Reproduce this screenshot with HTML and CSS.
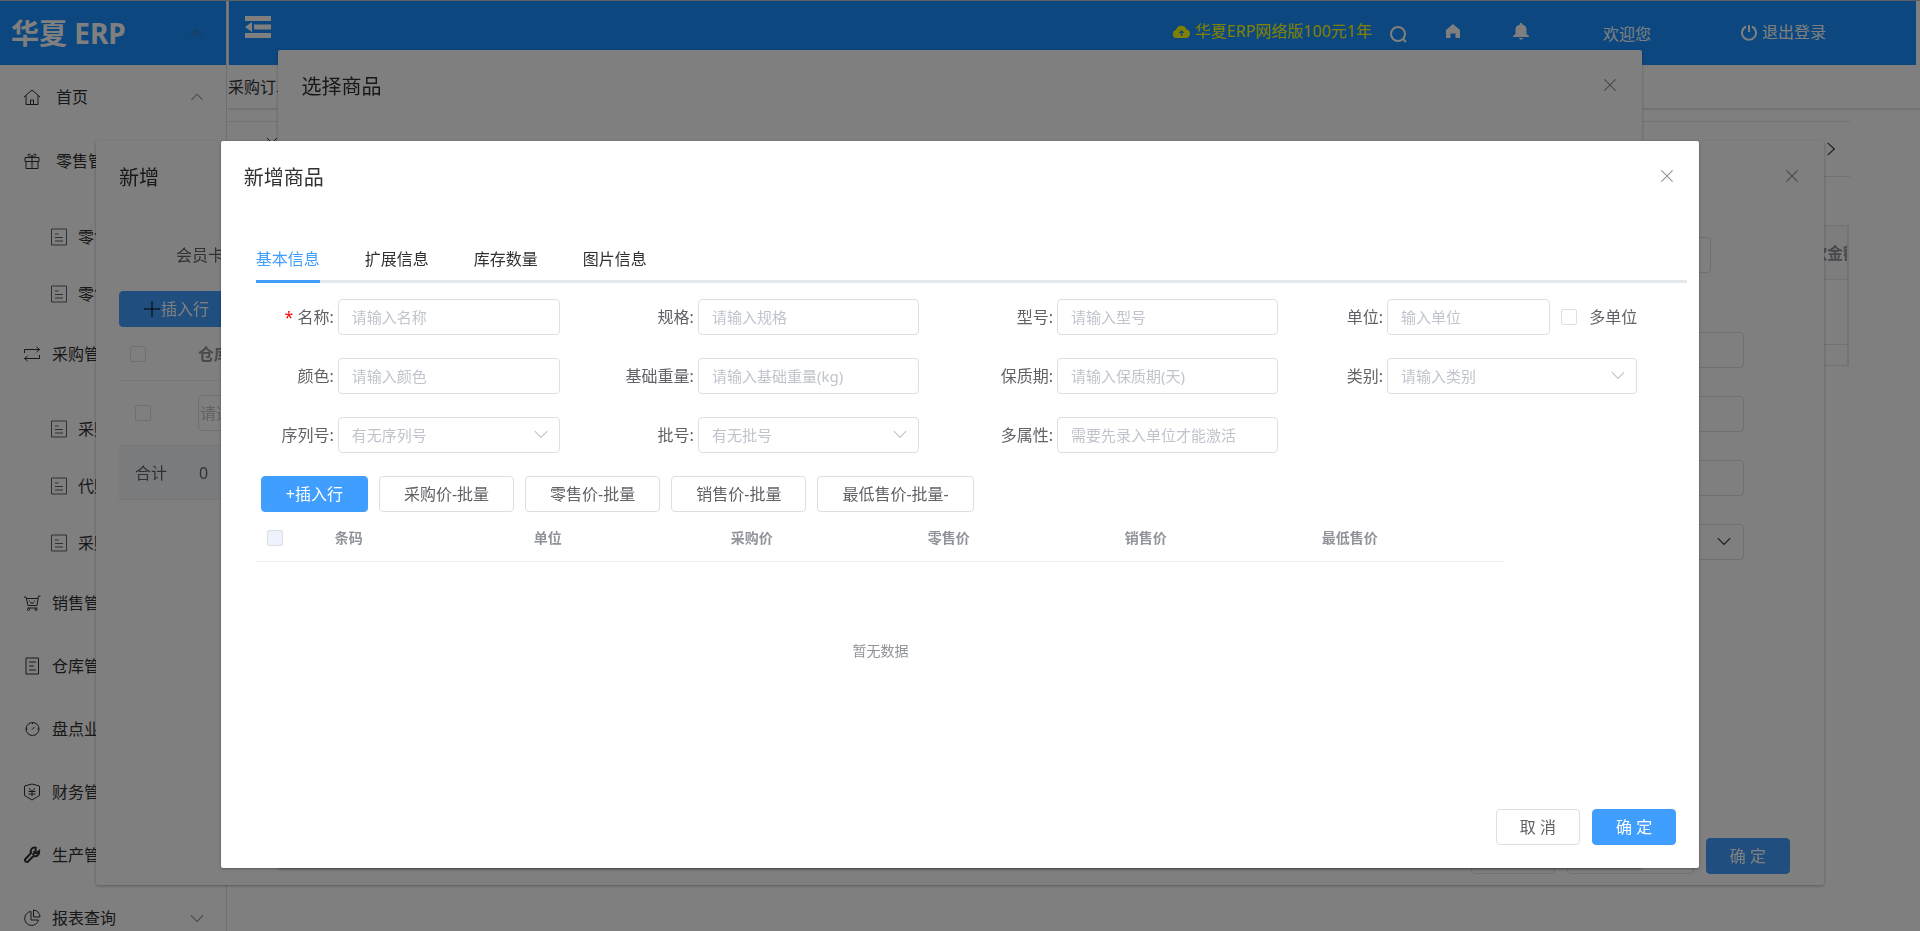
FILE: index.html
```html
<!DOCTYPE html>
<html lang="zh-CN">
<head>
<meta charset="utf-8">
<title>华夏 ERP</title>
<link rel="stylesheet" href="styles.css">
</head>
<body>
<svg class="defs" aria-hidden="true">
  <symbol id="i-up" viewBox="0 0 16 16"><path d="M3 10.500 8 5.500l5 5"/></symbol>
  <symbol id="i-down" viewBox="0 0 16 16"><path d="M2.500 5.500 8 11l5.500-5.500"/></symbol>
  <symbol id="i-right" viewBox="0 0 16 16"><path d="M5 2.500 11 8 5 13.500"/></symbol>
  <symbol id="i-close" viewBox="0 0 16 16"><path d="M3 3l10 10M13 3l-10 10"/></symbol>
  <symbol id="i-doc" viewBox="0 0 18 18"><path d="M1.500 1h15v16h-15zM5 6h3.500M5 9.500h8M5 13h8"/></symbol>
</svg>

<div class="app">
  <aside class="sidebar">
    <div class="brand">华夏 ERP <svg class="ico arrow"><use href="#i-up"/></svg></div>
    <nav class="menu">
      <a class="item wide" href="#"><svg class="ico" viewBox="0 0 18 18"><path d="M1 9 9 2l8 7M3 7.500V16.500h12V7.500M7.500 16.500v-4.500h3v4.500"/></svg>首页<svg class="ico arrow"><use href="#i-up"/></svg></a>
      <a class="item wide" href="#"><svg class="ico" viewBox="0 0 18 18"><path d="M2 5.500h14v4H2zM3 9.500v7h12v-7M9 5.500v11M9 5.500C5 5.500 4 2 6 2s3 3.500 3 3.500S10 2 12 2s1 3.500-3 3.500"/></svg>零售管理</a>
      <div class="sub">
        <a href="#"><svg class="ico"><use href="#i-doc"/></svg>零售出库</a>
        <a href="#"><svg class="ico"><use href="#i-doc"/></svg>零售退货</a>
      </div>
      <a class="item" href="#"><svg class="ico" viewBox="0 0 18 18"><path d="M1.500 8V4.500h15M13.500 2l3 2.500-3 2.500M16.500 10v3.500h-15M4.500 11l-3 2.500 3 2.500"/></svg>采购管理</a>
      <div class="sub">
        <a href="#"><svg class="ico"><use href="#i-doc"/></svg>采购订单</a>
        <a href="#"><svg class="ico"><use href="#i-doc"/></svg>代购订单</a>
        <a href="#"><svg class="ico"><use href="#i-doc"/></svg>采购入库</a>
      </div>
      <a class="item" href="#"><svg class="ico" viewBox="0 0 18 18"><path d="M1 3h2l2 8.500h9L15.500 2H17.500M3.500 4.500H15M4.500 14h10M6.500 6.500v1M11.500 6.500v1M7 8.500q2 1.500 4 0"/><circle cx="5.500" cy="15.500" r="1"/><circle cx="13" cy="15.500" r="1"/></svg>销售管理</a>
      <a class="item" href="#"><svg class="ico" viewBox="0 0 18 18"><path d="M3 1h12.500v16H3zM6 5h7M6 9h5M6 13h7"/></svg>仓库管理</a>
      <a class="item" href="#"><svg class="ico" viewBox="0 0 18 18"><circle cx="9.500" cy="9" r="6.500"/><path d="M9 9.500 11.500 7M9.500 2.500v1.500M3 9h1.500M14.500 9H16"/></svg>盘点业务</a>
      <a class="item" href="#"><svg class="ico" viewBox="0 0 18 18"><path d="M9 1l7.500 2v9.500L9 17l-7.500-4.500V3zM6 5l3 3.500L12 5M5.500 8.500h7M5.500 11h7M9 8.500V13.500"/></svg>财务管理</a>
      <a class="item" href="#"><svg class="ico bold" viewBox="0 0 18 18"><path d="M12.500 5.500l.3-3.800C9 1 7 4 8 7L2 13.500q-.5 2.500 2.500 2.500L10.500 10c3 1 6-1 5.700-5l-2.700 2-2-1zM11.500 7 9.500 9"/></svg>生产管理</a>
      <a class="item" href="#"><svg class="ico" viewBox="0 0 18 18"><path d="M8 2.500A7 7 0 1 0 15.500 11H8zM10.500 1v7h6.500A7 7 0 0 0 10.500 1z"/></svg>报表查询<svg class="ico arrow"><use href="#i-down"/></svg></a>
    </nav>
  </aside>

  <main class="main">
    <header class="topbar">
      <button class="fold" aria-label="收起菜单"><svg width="26" height="22" viewBox="0 0 26 22"><path d="M0 0h26v5H0zM9 8.500h17v5H9zM0 17h26v5H0zM7 6v10L0 11z"/></svg></button>
      <a class="promo" href="#"><svg width="17" height="13" viewBox="0 0 17 13"><path fill-rule="evenodd" d="M4.500 13A4 4 0 0 1 3 5 5.500 5.500 0 0 1 13.500 4.500 4.300 4.300 0 0 1 13 13zM8.500 5 5.500 8h2.300v3h1.400V8h2.300z"/></svg>华夏ERP网络版100元1年</a>
      <a class="search" href="#" aria-label="搜索"><svg width="17" height="17" viewBox="0 0 17 17"><circle cx="8" cy="8" r="7"/><path d="M13 13l3 3"/></svg></a>
      <a class="home" href="#" aria-label="主页"><svg width="16" height="16" viewBox="0 0 16 16"><path d="M8 1 1 7v8h4.500v-4.500h5V15H15V7z"/></svg></a>
      <a class="bell" href="#" aria-label="消息"><svg width="16" height="17" viewBox="0 0 16 17"><path d="M7 0h2v1.500c3 .5 4.500 2.500 4.500 5V11l2.500 2v1H0v-1l2.500-2V6.500c0-2.500 1.500-4.500 4.500-5zM5.500 15h5l-2.500 2z"/></svg></a>
      <span class="welcome">欢迎您</span>
      <a class="logout" href="#"><svg width="16" height="17" viewBox="0 0 16 17"><path d="M8 1v7M5 2.500a7 7 0 1 0 6 0"/></svg>退出登录</a>
    </header>
    <div class="crumb">采购订单</div>
    <div class="tabrow"><svg class="ico small"><use href="#i-close"/></svg><svg class="ico"><use href="#i-right"/></svg></div>
    <div class="behind"><div class="bh">欠款金额</div><div class="br"></div><div class="bf"></div></div>
  </main>
</div>

<div class="layer low">
  <section class="dialog add">
    <header><h2>新增</h2><button class="x" aria-label="关闭"><svg class="ico"><use href="#i-close"/></svg></button></header>
    <div class="add-body">
      <div class="add-left">
        <div class="card-label">会员卡号</div>
        <button class="btn primary tall"><svg class="plus" width="16" height="16" viewBox="0 0 16 16"><path d="M8 0v16M0 8h16"/></svg>插入行</button>
        <div class="row head"><input type="checkbox" aria-label="全选"><b>仓库</b></div>
        <div class="row line"><input type="checkbox" aria-label="选择"><input class="field" type="text" placeholder="请选择" aria-label="仓库"></div>
        <div class="row total"><span>合计</span><span>0</span></div>
      </div>
      <div class="add-right">
        <input class="field first" type="text" aria-label="会员卡号">
        <input class="field" type="text" aria-label="优惠率">
        <input class="field" type="text" aria-label="优惠金额">
        <input class="field" type="text" aria-label="收款金额">
        <div class="pick"><select class="field" aria-label="结算账户"><option></option></select><svg class="ico"><use href="#i-down"/></svg></div>
      </div>
    </div>
    <footer><button class="btn blank" aria-label="取消"></button><button class="btn blank long" aria-label="保存"></button><button class="btn primary">确 定</button></footer>
  </section>
</div>

<div class="layer mid">
  <section class="dialog choose">
    <header><h2>选择商品</h2><button class="x" aria-label="关闭"><svg class="ico"><use href="#i-close"/></svg></button></header>
  </section>
</div>

<div class="mask"></div>

<div class="layer top">
  <section class="dialog product">
    <header><h2>新增商品</h2><button class="x" aria-label="关闭"><svg class="ico"><use href="#i-close"/></svg></button></header>
    <div class="tabs">
      <button class="tab active">基本信息</button><button class="tab">扩展信息</button><button class="tab">库存数量</button><button class="tab">图片信息</button>
    </div>
    <form class="form">
      <div class="cell"><label for="f1"><i>*</i> 名称:</label><input class="field" id="f1" type="text" placeholder="请输入名称"></div>
      <div class="cell"><label for="f2">规格:</label><input class="field" id="f2" type="text" placeholder="请输入规格"></div>
      <div class="cell"><label for="f3">型号:</label><input class="field" id="f3" type="text" placeholder="请输入型号"></div>
      <div class="cell last"><label for="f4">单位:</label><input class="field" id="f4" type="text" placeholder="输入单位"><span class="multi"><input type="checkbox" id="multi"><label for="multi">多单位</label></span></div>
      <div class="cell"><label for="f5">颜色:</label><input class="field" id="f5" type="text" placeholder="请输入颜色"></div>
      <div class="cell"><label for="f6">基础重量:</label><input class="field" id="f6" type="text" placeholder="请输入基础重量(kg)"></div>
      <div class="cell"><label for="f7">保质期:</label><input class="field" id="f7" type="text" placeholder="请输入保质期(天)"></div>
      <div class="cell last"><label for="f8">类别:</label><div class="pick"><select class="field" id="f8"><option>请输入类别</option></select><svg class="ico"><use href="#i-down"/></svg></div></div>
      <div class="cell"><label for="f9">序列号:</label><div class="pick"><select class="field" id="f9"><option>有无序列号</option></select><svg class="ico"><use href="#i-down"/></svg></div></div>
      <div class="cell"><label for="f10">批号:</label><div class="pick"><select class="field" id="f10"><option>有无批号</option></select><svg class="ico"><use href="#i-down"/></svg></div></div>
      <div class="cell"><label for="f11">多属性:</label><input class="field" id="f11" type="text" placeholder="需要先录入单位才能激活"></div>
    </form>
    <div class="tools">
      <button class="btn primary">+插入行</button><button class="btn">采购价-批量</button><button class="btn">零售价-批量</button><button class="btn">销售价-批量</button><button class="btn">最低售价-批量-</button>
    </div>
    <table class="grid">
      <thead><tr><th class="c0"><input type="checkbox" class="dim" aria-label="全选" disabled></th><th class="c1">条码</th><th>单位</th><th>采购价</th><th>零售价</th><th>销售价</th><th class="end">最低售价</th></tr></thead>
      <tbody><tr><td colspan="7">暂无数据</td></tr></tbody>
    </table>
    <footer><button class="btn">取 消</button><button class="btn primary">确 定</button></footer>
  </section>
</div>
</body>
</html>
```
FILE: styles.css
```css
* { box-sizing: border-box; }
html, body { height: 100%; }
body {
  margin: 0;
  border-top: 1px solid #c0c0c0;
  overflow: hidden;
  background: #fff;
  color: #303133;
  font: 16px/24px "Noto Sans", "Noto Sans CJK SC", sans-serif;
}
a { color: inherit; text-decoration: none; }
button, input, select { font: inherit; color: inherit; margin: 0; }
button { border: 0; background: none; padding: 0; cursor: pointer; }
.defs { position: absolute; width: 0; height: 0; }
.ico { width: 18px; height: 18px; fill: none; stroke: currentColor; stroke-width: 1; flex: none; }
.ico.bold { stroke-width: 2; }

/* page shell */
.app { display: flex; height: 100%; }
.sidebar { width: 227px; flex: none; border-right: 1px solid #dcdfe6; overflow: hidden; }
.brand {
  height: 64px;
  display: flex;
  align-items: center;
  background: #1890ff;
  color: #fff;
  font-size: 28px;
  font-weight: 700;
  padding: 0 20px 0 11px;
}
.arrow { margin-left: auto; color: #909399; }
.brand .arrow { color: #4a6f96; }
.item { display: flex; align-items: center; height: 63px; padding: 0 20px 0 23px; gap: 11px; white-space: nowrap; }
.item.wide { height: 64px; gap: 15px; }
.sub { padding-top: 15px; }
.sub a { display: flex; align-items: center; gap: 10px; height: 57px; padding-left: 50px; white-space: nowrap; }
.sub .ico { color: #606266; }
.main { flex: 1; min-width: 0; margin-left: 1px; }
.topbar {
  display: flex;
  align-items: center;
  height: 64px;
  margin-right: 4px;
  padding: 0 90px 12px 16px;
  background: #1890ff;
  border-left: 1px solid #dcdfe6;
  color: #fff;
}
.topbar a { display: flex; align-items: center; gap: 5px; }
.topbar svg { fill: currentColor; }
.fold { height: 22px; margin-right: auto; color: #fff; }
.topbar .promo { color: #ff0; padding-top: 8px; }
.search { margin-left: 18px; padding-top: 14px; }
.home, .bell { padding-top: 8px; }
.home { margin-left: 38px; }
.bell { margin-left: 52px; }
.welcome { margin-left: 74px; padding-top: 14px; }
.logout { margin-left: 90px; padding-top: 10px; }
.topbar .search svg, .topbar .logout svg { fill: none; stroke: currentColor; stroke-width: 2; }
.crumb { height: 45px; line-height: 44px; border-bottom: 2px solid #e4e7ed; }
.tabrow {
  display: flex;
  align-items: center;
  justify-content: space-between;
  height: 56px;
  margin: 11px 70px 0 0;
  padding: 0 10px 0 36px;
  border-top: 1px solid #e4e7ed;
  border-bottom: 1px solid #e4e7ed;
}
.tabrow .small { align-self: flex-start; width: 16px; height: 16px; margin-top: 13px; }
.behind { margin: 48px 71px 0 8px; border: 1px solid #e4e7ed; border-right-width: 2px; overflow: hidden; }
.bh { height: 54px; line-height: 54px; background: #fafafa; border-bottom: 1px solid #e4e7ed; font-weight: 700; color: #909399; text-align: right; margin-right: -12px; }
.br { height: 65px; border-bottom: 1px solid #e4e7ed; }
.bf { height: 20px; }

/* stacked dialogs */
.layer { position: fixed; inset: 0; display: flex; justify-content: center; align-items: flex-start; pointer-events: none; }
.low, .top { padding-top: 141px; }
.mid { padding-top: 50px; }
.mask { position: fixed; inset: 0; background: rgba(0, 0, 0, .5); }
.dialog {
  display: flex;
  flex-direction: column;
  background: #fff;
  border-radius: 2px;
  box-shadow: 0 1px 3px rgba(0, 0, 0, .3);
  pointer-events: auto;
}
.dialog > header { display: flex; align-items: center; justify-content: space-between; height: 70px; padding: 0 23px; }
.dialog h2 { margin: 0; padding-top: 3px; font-size: 20px; line-height: 28px; font-weight: 400; }
.x { height: 18px; color: #909399; }
.dialog > footer { display: flex; justify-content: flex-end; gap: 12px; margin-top: auto; padding: 0 23px 23px; }
.add { width: 90%; min-height: 744px; }
.choose { width: 71%; min-height: 818px; }
.product { width: 77%; min-height: 727px; }

/* controls */
.btn {
  height: 36px;
  padding: 0 23px;
  border: 1px solid #dcdfe6;
  border-radius: 4px;
  background: #fff;
  color: #606266;
  white-space: nowrap;
}
.btn.primary { background: #409eff; border-color: #409eff; color: #fff; }
.field {
  width: 100%;
  min-width: 0;
  height: 36px;
  padding: 0 13px;
  border: 1px solid #dcdfe6;
  border-radius: 4px;
  background: #fff;
  font-size: 15px;
}
.field::placeholder { color: #c0c4cc; opacity: 1; }
select.field { appearance: none; color: #c0c4cc; }
.pick { position: relative; flex: 1; min-width: 0; height: 36px; }
.pick .ico { position: absolute; right: 10px; top: 8px; color: #c0c4cc; pointer-events: none; }
input[type="checkbox"] { appearance: none; width: 16px; height: 16px; flex: none; border: 1px solid #dcdfe6; border-radius: 2px; background: #fff; }
input.dim { background: #edf2fc; }

/* lower dialog */
.add-body { display: flex; justify-content: space-between; padding: 0 80px 0 23px; }
.add-left { flex: 1; color: #606266; }
.card-label { padding: 32px 0 0 57px; height: 80px; }
.tall { display: flex; align-items: center; padding: 0 24px; gap: 1px; }
.plus { fill: none; stroke: #000; }
.row { display: flex; align-items: center; border-bottom: 1px solid #ebeef5; }
.row.head { height: 54px; padding-left: 11px; gap: 52px; color: #909399; }
.row.line { height: 65px; padding-left: 16px; gap: 47px; }
.row.line .field { width: 160px; padding: 0 1px; font-size: 16px; }
.row.total { height: 54px; padding-left: 16px; gap: 32px; background: #f5f7fa; }
.add-right { display: grid; grid-template-rows: 67px; grid-auto-rows: 36px; gap: 28px; width: 300px; padding-top: 26px; }
.add-right .field.first { width: 267px; }
.add-right .pick .ico { color: #303133; right: 11px; }
.add > footer { padding: 0 34px 11px; }
.btn.blank { width: 84px; }
.btn.blank.long { width: 127px; }

/* product dialog */
.tabs { display: flex; gap: 45px; margin: 33px 12px 0 35px; border-bottom: 3px solid #e4e7ed; }
.tab { height: 39px; margin-bottom: -3px; padding-bottom: 7px; border-bottom: 3px solid transparent; line-height: 24px; }
.tab.active { color: #409eff; border-color: #409eff; }
.form {
  display: grid;
  grid-template-columns: 360fr 359fr 359fr 353fr;
  row-gap: 23px;
  padding: 16px 12px 0 35px;
  color: #606266;
}
.cell { display: flex; align-items: center; padding-right: 56px; }
.cell > label { width: 82px; padding-right: 4px; text-align: right; white-space: nowrap; }
.cell > .field { flex: 1; }
.cell i { color: #f00; font-style: normal; }
.cell.last { padding-right: 50px; }
.cell.last > label { width: 53px; }
.multi { display: flex; align-items: center; gap: 12px; margin-left: 11px; }
.tools { display: flex; gap: 11px; padding: 23px 0 0 40px; }
.tools .btn { padding: 0 24px; }
.grid { width: calc(100% - 229px); margin: 4px 0 0 35px; border-collapse: collapse; table-layout: fixed; font-size: 14px; color: #909399; }
.grid th { width: 197px; height: 45px; padding: 0 0 0 10px; text-align: left; font-weight: 700; border-bottom: 1px solid #ebeef5; }
.grid .c0 { width: 69px; padding-left: 11px; }
.grid .c0 input { display: block; }
.grid .c1 { width: 199px; }
.grid .end { width: auto; }
.grid td { height: 180px; padding: 0; text-align: center; }
```
